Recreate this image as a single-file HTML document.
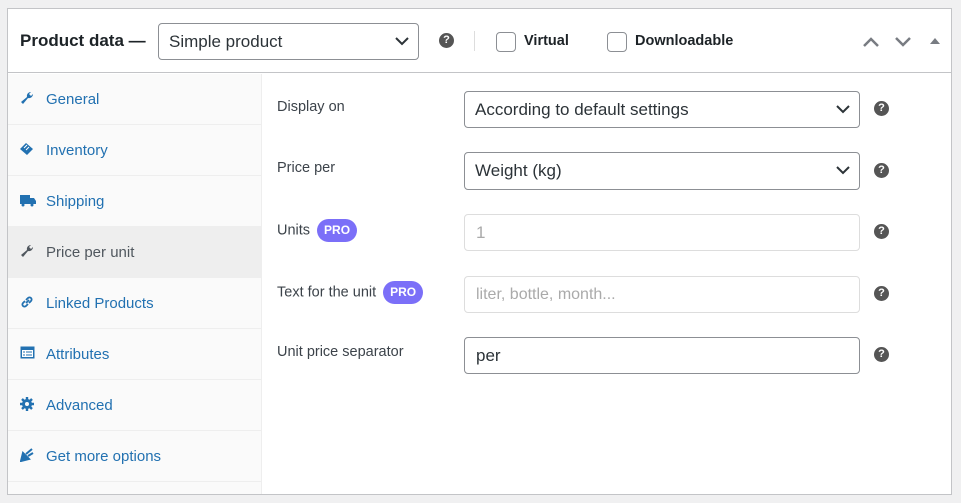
<!DOCTYPE html>
<html><head><style>
*{box-sizing:border-box;margin:0;padding:0}
body{width:961px;height:503px;background:#f0f0f1;font-family:"Liberation Sans",sans-serif;position:relative;overflow:hidden}
.panel{position:absolute;left:7px;top:8px;width:945px;height:487px;background:#fff;border:1px solid #c3c4c7}
.abs{position:absolute}
.hdr{position:absolute;left:0;top:0;width:943px;height:64px;border-bottom:1px solid #c3c4c7}
.sel{position:absolute;border:1px solid #8c8f94;border-radius:4px;background:#fff;color:#2c3338;font-size:17px;padding-left:10px;display:flex;align-items:center}
.sel svg{position:absolute;right:9px;top:50%;margin-top:-5px}
.help{position:absolute;width:15px;height:15px;border-radius:50%;background:#555;color:#fff;font-size:11px;font-weight:bold;text-align:center;line-height:15px}
.cb{position:absolute;width:20px;height:20px;border:1px solid #8c8f94;border-radius:4px;background:#fff}
.side{position:absolute;left:0;top:65px;width:254px;height:420px;background:#fafafa;border-right:1px solid #eee}
.item{height:51px;border-bottom:1px solid #eee;color:#2271b1;font-size:15px;display:flex;align-items:center;padding-left:38px;position:relative}
.item.act{background:#eee;color:#50575e}
.item i{position:absolute;left:12px;top:17px;width:14px;height:14px;display:block}
.lbl{position:absolute;left:269px;color:#3c434a;font-size:14.5px}
.pro{display:inline-block;background:#7b6ff8;color:#fff;font-weight:bold;font-size:12px;border-radius:12px;padding:0 7px;height:23px;line-height:23px;margin-left:7px;vertical-align:middle}
.inp{position:absolute;left:456px;width:396px;height:37px;border:1px solid #ddd;border-radius:4px;font-size:17px;padding-left:11px;display:flex;align-items:center;color:#aaa}
</style></head><body>
<div class="panel">
 <div class="hdr">
  <div class="abs" style="left:12px;top:22px;font-size:17px;font-weight:bold;color:#1d2327">Product data —</div>
  <div class="sel" style="left:150px;top:14px;width:261px;height:37px">Simple product<svg width="14" height="9" viewBox="0 0 14 9"><path d="M1 1l6 6 6-6" stroke="#2c3338" stroke-width="2" fill="none"/></svg></div>
  <div class="help" style="left:431px;top:24px">?</div>
  <div class="abs" style="left:466px;top:22px;width:1px;height:20px;background:#ddd"></div>
  <div class="cb" style="left:488px;top:23px"></div>
  <div class="abs" style="left:516px;top:24px;font-size:14.5px;font-weight:bold;color:#1d2327">Virtual</div>
  <div class="cb" style="left:599px;top:23px"></div>
  <div class="abs" style="left:627px;top:24px;font-size:14.5px;font-weight:bold;color:#1d2327">Downloadable</div>
  <svg class="abs" style="left:854px;top:27px" width="18" height="12"><path d="M2 10l7-7 7 7" stroke="#787c82" stroke-width="2.5" fill="none"/></svg>
  <svg class="abs" style="left:886px;top:27px" width="18" height="12"><path d="M2 2l7 7 7-7" stroke="#787c82" stroke-width="2.5" fill="none"/></svg>
  <svg class="abs" style="left:922px;top:28px" width="10" height="8"><path d="M0 7L5 1 10 7z" fill="#787c82"/></svg>
 </div>
 <div class="side">
  <div class="item"><i><svg width="14" height="14" viewBox="0 0 14 14"><path d="M13 3a4 4 0 0 1-5 4L3 13l-2-2 6-5a4 4 0 0 1 4-5L9 3l2 2z" fill="#2271b1"/></svg></i>General</div>
  <div class="item"><i><svg width="14" height="14" viewBox="0 0 14 14"><path d="M6 1l7 6-6 6-7-6z" fill="#2271b1"/><path d="M4 6l3-3M6 8l3-3" stroke="#fff"/></svg></i>Inventory</div>
  <div class="item"><i><svg width="16" height="14" viewBox="0 0 16 14"><path d="M0 2h10v9H0zM10 5h4l2 3v3h-6z" fill="#2271b1"/><circle cx="3" cy="12" r="1.5" fill="#2271b1"/><circle cx="12" cy="12" r="1.5" fill="#2271b1"/></svg></i>Shipping</div>
  <div class="item act"><i><svg width="14" height="14" viewBox="0 0 14 14"><path d="M13 3a4 4 0 0 1-5 4L3 13l-2-2 6-5a4 4 0 0 1 4-5L9 3l2 2z" fill="#50575e"/></svg></i>Price per unit</div>
  <div class="item"><i><svg width="14" height="14" viewBox="0 0 14 14"><path d="M6 8l3-3M5 6L3 8a2 2 0 0 0 3 3l2-2M9 8l2-2a2 2 0 0 0-3-3L6 5" stroke="#2271b1" stroke-width="1.8" fill="none"/></svg></i>Linked Products</div>
  <div class="item"><i><svg width="15" height="13" viewBox="0 0 15 13"><rect x="0.5" y="0.5" width="14" height="12" fill="#2271b1"/><rect x="2" y="4" width="11" height="7" fill="#fff"/><path d="M3 6h2M6 6h6M3 9h2M6 9h6" stroke="#2271b1"/></svg></i>Attributes</div>
  <div class="item"><i><svg width="14" height="14" viewBox="0 0 14 14"><circle cx="7" cy="7" r="5" fill="#2271b1"/><path d="M7 0v14M0 7h14M2 2l10 10M12 2L2 12" stroke="#2271b1" stroke-width="2.4"/><circle cx="7" cy="7" r="2" fill="#fafafa"/></svg></i>Advanced</div>
  <div class="item"><i><svg width="14" height="14" viewBox="0 0 14 14"><path d="M1 13l2-8 6 6zM6 6l6-5M8 8l5-3" stroke="#2271b1" stroke-width="2" fill="#2271b1"/></svg></i>Get more options</div>
 </div>
 <div class="lbl" style="top:90px">Display on</div>
 <div class="sel" style="left:456px;top:82px;width:396px;height:37px">According to default settings<svg width="14" height="9" viewBox="0 0 14 9"><path d="M1 1l6 6 6-6" stroke="#2c3338" stroke-width="2" fill="none"/></svg></div>
 <div class="lbl" style="top:151px">Price per</div>
 <div class="sel" style="left:456px;top:143px;width:396px;height:38px">Weight (kg)<svg width="14" height="9" viewBox="0 0 14 9"><path d="M1 1l6 6 6-6" stroke="#2c3338" stroke-width="2" fill="none"/></svg></div>
 <div class="lbl" style="top:210px">Units<span class="pro">PRO</span></div>
 <div class="inp" style="top:205px">1</div>
 <div class="lbl" style="top:272px">Text for the unit<span class="pro">PRO</span></div>
 <div class="inp" style="top:267px;font-size:16px">liter, bottle, month...</div>
 <div class="lbl" style="top:335px">Unit price separator</div>
 <div class="inp" style="top:328px;border-color:#8c8f94;color:#2c3338">per</div>
 <div class="help" style="left:866px;top:92px">?</div>
 <div class="help" style="left:866px;top:154px">?</div>
 <div class="help" style="left:866px;top:215px">?</div>
 <div class="help" style="left:866px;top:277px">?</div>
 <div class="help" style="left:866px;top:338px">?</div>
</div>
</body></html>
